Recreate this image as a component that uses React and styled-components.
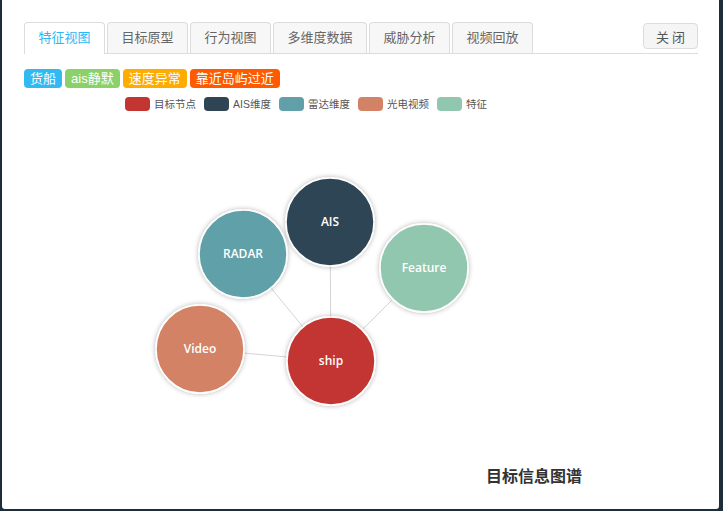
import React from 'react';
import styled, { createGlobalStyle } from 'styled-components';

const GlobalStyle = createGlobalStyle`
  html, body {
    margin: 0;
    padding: 0;
    background: #1f2c3a;
    font-family: "Liberation Sans", "Noto Sans CJK SC", sans-serif;
  }
`;

const Panel = styled.div`
  box-sizing: border-box;
  width: 717px;
  height: 509px;
  margin-left: 2px;
  background: #fff;
  border-radius: 0 0 3px 3px;
  padding: 22px 21px 0 22px;
`;

const TabBar = styled.div`
  display: flex;
  align-items: flex-start;
  gap: 2px;
  height: 31px;
  border-bottom: 1px solid #dcdcdc;
`;

const Tab = styled.div`
  box-sizing: border-box;
  height: ${(p) => (p.active ? '32px' : '31px')};
  padding: 0 13.5px;
  line-height: 30px;
  font-size: 13px;
  color: ${(p) => (p.active ? '#2db7f5' : '#666')};
  background: ${(p) => (p.active ? '#fff' : '#f7f7f7')};
  border: 1px solid #dcdcdc;
  border-bottom: none;
  border-radius: 4px 4px 0 0;
`;

const CloseButton = styled.button`
  margin-left: auto;
  margin-top: 1px;
  width: 55px;
  height: 26px;
  font-family: inherit;
  font-size: 13px;
  color: #555;
  background: #f5f5f5;
  border: 1px solid #dcdcdc;
  border-radius: 4px;
  letter-spacing: 3px;
  padding: 0 0 0 3px;
`;

const TagRow = styled.div`
  display: flex;
  gap: 3px;
  margin-top: 15px;
`;

const Tag = styled.span`
  height: 19px;
  line-height: 19px;
  padding: 0 6px;
  font-size: 13px;
  color: #fff;
  border-radius: 4px;
  background: ${(p) => p.color};
`;

const Legend = styled.div`
  display: flex;
  align-items: center;
  gap: 8px;
  margin: 8px 0 0 101px;
`;

const LegendItem = styled.div`
  display: flex;
  align-items: center;
  gap: 4px;
  font-size: 10.5px;
  color: #555;
`;

const Swatch = styled.span`
  width: 25px;
  height: 14px;
  border-radius: 4px;
  background: ${(p) => p.color};
`;

const Graph = styled.svg`
  display: block;
  margin-top: 4px;
  overflow: visible;
`;

const Title = styled.div`
  margin: 16px 0 0 462px;
  font-size: 16px;
  font-weight: bold;
  color: #333;
`;

const tabs = ['特征视图', '目标原型', '行为视图', '多维度数据', '威胁分析', '视频回放'];

const tags = [
  { text: '货船', color: '#32b9f1' },
  { text: 'ais静默', color: '#8bd16a' },
  { text: '速度异常', color: '#ffab00' },
  { text: '靠近岛屿过近', color: '#ff5a00' },
];

const legend = [
  { text: '目标节点', color: '#c23531' },
  { text: 'AIS维度', color: '#2f4554' },
  { text: '雷达维度', color: '#61a0a8' },
  { text: '光电视频', color: '#d48265' },
  { text: '特征', color: '#91c7ae' },
];

// graph coordinates relative to the svg origin (page x 24, y 114)
const ox = 24;
const oy = 114;
const nodes = [
  { id: 'ship', x: 331, y: 360, color: '#c23531' },
  { id: 'AIS', x: 330, y: 221, color: '#2f4554' },
  { id: 'RADAR', x: 243, y: 253, color: '#61a0a8' },
  { id: 'Feature', x: 424, y: 267, color: '#91c7ae' },
  { id: 'Video', x: 200, y: 348, color: '#d48265' },
];

const App = () => {
  const ship = nodes[0];
  return (
    <>
      <GlobalStyle />
      <Panel>
        <TabBar>
          {tabs.map((t, i) => (
            <Tab key={t} active={i === 0}>
              {t}
            </Tab>
          ))}
          <CloseButton>关闭</CloseButton>
        </TabBar>
        <TagRow>
          {tags.map((t) => (
            <Tag key={t.text} color={t.color}>
              {t.text}
            </Tag>
          ))}
        </TagRow>
        <Legend>
          {legend.map((l) => (
            <LegendItem key={l.text}>
              <Swatch color={l.color} />
              {l.text}
            </LegendItem>
          ))}
        </Legend>
        <Graph width="674" height="332" viewBox={`${ox} ${oy} 674 332`}>
          <defs>
            <filter id="shadow" x="-30%" y="-30%" width="160%" height="160%">
              <feDropShadow dx="0" dy="0" stdDeviation="2.5" floodColor="#000" floodOpacity="0.3" />
            </filter>
          </defs>
          {nodes.slice(1).map((n) => (
            <line key={n.id} x1={ship.x} y1={ship.y} x2={n.x} y2={n.y} stroke="#d4d4d4" strokeWidth="1" />
          ))}
          {nodes.map((n) => (
            <g key={n.id}>
              <circle cx={n.x} cy={n.y} r="44" fill={n.color} stroke="#fff" strokeWidth="1.5" filter="url(#shadow)" />
              <text
                x={n.x}
                y={n.y + 4}
                textAnchor="middle"
                fill="#fff"
                fontSize="12"
                fontWeight="600"
                fontFamily="'Open Sans', 'Noto Sans', sans-serif"
              >
                {n.id}
              </text>
            </g>
          ))}
        </Graph>
        <Title>目标信息图谱</Title>
      </Panel>
    </>
  );
};

export default App;
